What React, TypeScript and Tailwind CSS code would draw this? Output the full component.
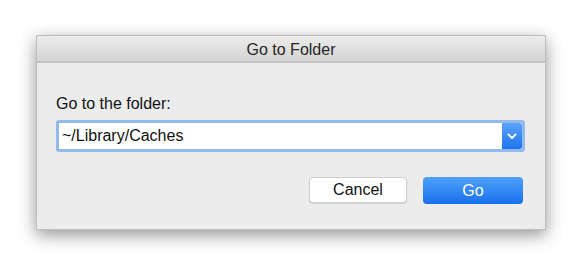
import React from "react";

export default function App() {
  return (
    <div
      className="w-[580px] h-[265px] bg-white pt-[35px] pl-[36px]"
      style={{ fontFamily: '"Liberation Sans", Arial, sans-serif' }}
    >
      <div className="w-[510px] h-[195px] bg-[#ececec] flex flex-col border border-[#bdbdbd] shadow-[0_5px_16px_rgba(0,0,0,0.42)]">
        <div className="h-[27px] pt-[2px] flex items-center justify-center bg-gradient-to-b from-[#ececec] to-[#d4d4d4] border-b-2 border-[#c2c2c2] text-[16px] text-[#262626]">
          Go to Folder
        </div>
        <div className="flex flex-col pl-[19px] pr-[20px]">
          <div className="mt-[31px] text-[16px] leading-[20px] text-[#111]">Go to the folder:</div>
          <div className="mt-[6px] h-[32px] flex rounded-[3px] border-[3px] border-[#93b9ee] bg-white">
            <div className="flex-1 flex items-center pl-[3px] text-[16px] text-[#111]">~/Library/Caches</div>
            <div className="w-[20px] flex items-center justify-center bg-gradient-to-b from-[#5aa3f8] to-[#1c74ef] rounded-r-[2px]">
              <svg width="10" height="7" viewBox="0 0 10 7">
                <path d="M1.5 1.5 L5 5 L8.5 1.5" fill="none" stroke="white" strokeWidth="1.8" strokeLinecap="round" strokeLinejoin="round" />
              </svg>
            </div>
          </div>
          <div className="mt-[25px] flex justify-end gap-[16px] pr-[2px]">
            <div className="w-[98px] h-[26px] flex items-center justify-center bg-white rounded-[4px] border border-[#cfcfcf] shadow-[0_1px_1px_rgba(0,0,0,0.12)] text-[16px] text-[#111]">
              Cancel
            </div>
            <div className="w-[100px] h-[27px] flex items-center justify-center rounded-[4px] bg-gradient-to-b from-[#4fa0f8] to-[#1570ee] text-[16px] text-white">
              Go
            </div>
          </div>
        </div>
      </div>
    </div>
  );
}
